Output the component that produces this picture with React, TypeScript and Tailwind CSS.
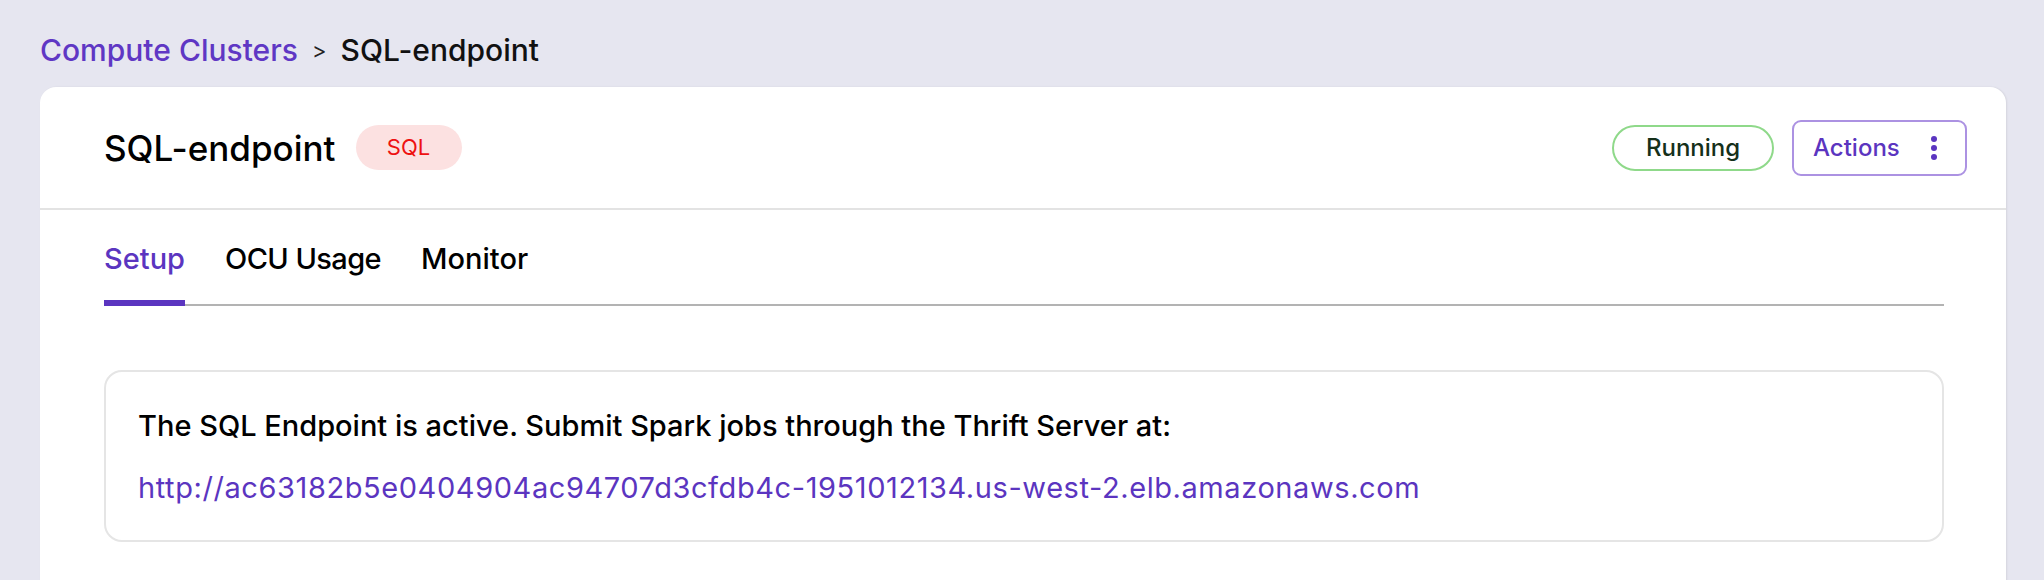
import React from "react";

export default function App() {
  return (
    <div
      className="min-h-screen bg-[#e6e6f0] pl-[40px] pr-[38px] pt-[30px]"
      style={{ fontFamily: "Inter, 'Noto Sans', sans-serif" }}
    >
      <nav className="flex items-center h-[40px] mb-[17px] text-[30px] leading-[40px]">
        <span className="text-[#5f37c4] font-medium">Compute Clusters</span>
        <span className="mx-[14px] text-[22px] text-[#222]">&gt;</span>
        <span className="text-[#111] font-medium">SQL-endpoint</span>
      </nav>

      <div className="bg-white rounded-[16px] shadow-[1px_0_2px_rgba(0,0,0,0.08)] pb-[80px]">
        <div className="flex items-center justify-between h-[123px] pl-[64px] pr-[39px] border-b-2 border-[#e3e3e3]">
          <div className="flex items-center gap-[20px]">
            <h1 className="text-[35px] leading-[44px] font-medium text-black">SQL-endpoint</h1>
            <span className="flex items-center justify-center w-[106px] h-[45px] rounded-full bg-[#fce1e1] text-[#ee1111] text-[22px]">
              SQL
            </span>
          </div>
          <div className="flex items-center gap-[18px]">
            <span className="flex items-center justify-center w-[162px] h-[46px] rounded-full border-2 border-[#8fd98a] text-[#15301a] text-[24px] font-medium">
              Running
            </span>
            <button className="flex items-center w-[175px] h-[56px] rounded-[9px] border-2 border-[#ac92e2] pl-[19px] text-[#5b35c0] text-[24px] font-medium">
              <span>Actions</span>
              <svg width="6" height="26" viewBox="0 0 6 26" className="ml-[31px]">
                <circle cx="3" cy="4" r="3" fill="#5b35c0" />
                <circle cx="3" cy="13" r="3" fill="#5b35c0" />
                <circle cx="3" cy="22" r="3" fill="#5b35c0" />
              </svg>
            </button>
          </div>
        </div>

        <div className="pl-[64px] pr-[62px]">
          <div className="flex gap-[40px] pt-[29px] border-b-2 border-[#b3b3b3]">
            <button className="text-[29px] leading-[40px] font-medium text-[#5b35c0] pb-[21px] border-b-[6px] border-[#5b35c0] -mb-[2px]">
              Setup
            </button>
            <button className="text-[29px] leading-[40px] font-medium text-black pb-[21px] border-b-[6px] border-transparent -mb-[2px] tracking-[-0.02em]">
              OCU Usage
            </button>
            <button className="text-[29px] leading-[40px] font-medium text-black pb-[21px] border-b-[6px] border-transparent -mb-[2px]">
              Monitor
            </button>
          </div>

          <div className="mt-[64px] border-2 border-[#e5e5e5] rounded-[18px] pl-[32px] pt-[36px] pb-[34px]">
            <p className="text-[29px] leading-[36px] font-medium text-black">
              The SQL Endpoint is active. Submit Spark jobs through the Thrift Server at:
            </p>
            <a className="block mt-[26px] text-[29px] leading-[36px] text-[#5b35c0] tracking-[0.02em]">
              http://ac63182b5e0404904ac94707d3cfdb4c-1951012134.us-west-2.elb.amazonaws.com
            </a>
          </div>
        </div>
      </div>
    </div>
  );
}
